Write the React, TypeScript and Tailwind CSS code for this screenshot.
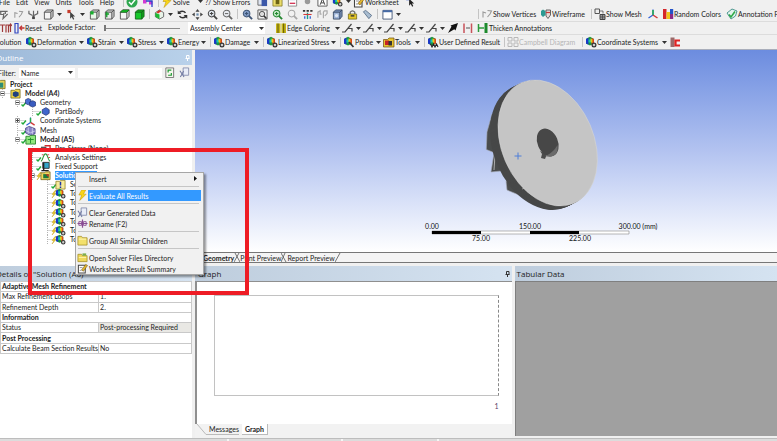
import type { ReactNode } from "react";

/* ---------- icons ---------- */

type IconName =
  | "contour" | "bolt" | "check" | "cube" | "cubeGreen" | "cubeFace" | "cubeTop" | "cubeFull" | "select" | "view3d"
  | "rotate" | "pan" | "zoomIn" | "zoomOut" | "zoomBox" | "zoomFit" | "zoomGreen" | "zoomGray" | "axes" | "flag"
  | "eye" | "camera" | "tag" | "window" | "wire" | "mesh" | "colors" | "note" | "edge" | "slash"
  | "arrowFat" | "thick" | "thicken" | "grid" | "red" | "probe" | "tools" | "user" | "folder" | "folderOpen" | "project"
  | "model" | "parts" | "part" | "meshTree" | "modal" | "prestress" | "settings" | "support" | "info"
  | "clear" | "rename" | "worksheet" | "page" | "letter" | "points" | "vertex" | "pick" | "solution" | "explode"
  | "reset" | "chart" | "pages" | "light" | "sheet" | "dot" | "pointer" | "padlock";

function Lens({ c, fill, sign }: { c: string; fill: string; sign?: "+" | "-" }) {
  return (
    <>
      <circle cx="5" cy="5" r="3.600" fill={fill} stroke={c} strokeWidth="1.100" />
      <path d="M7.500 7.500 11 11" stroke={c} strokeWidth="2" />
      {sign && <path d={sign === "+" ? "M3.200 5h3.600M5 3.200v3.600" : "M3.200 5h3.600"} stroke={c} strokeWidth="1.100" />}
    </>
  );
}

function Box({ f, front, s }: { f: string; front: string; s: string }) {
  return (
    <>
      <path d="M1.500 3.500 4 1h7v7l-2.500 3z" fill={f} stroke={s} strokeWidth=".9" />
      <path d="M1.500 3.500h7V11h-7z" fill={front} stroke={s} strokeWidth=".9" />
      <path d="M8.500 3.500 11 1" stroke={s} strokeWidth=".9" />
    </>
  );
}

function Rainbow() {
  return (
    <>
      <path d="M1 3 5 .8 9 3v4.500L5 9.600 1 7.500z" fill="#1c9a3a" />
      <path d="M1 3 3.500 1.600V8.800L1 7.500z" fill="#1b37c8" />
      <path d="M3.500 3.500h2.400v3H3.500z" fill="#18c4b8" />
      <path d="M6.500 2 9 3v4.500L6.500 8.600z" fill="#d8451c" />
      <path d="M5.500 2.600 7.400 3.400V7L5.500 6z" fill="#e8d21c" />
    </>
  );
}

const drawings: Record<IconName, ReactNode> = {
  contour: (<><Rainbow /><circle cx="9" cy="9" r="1.900" fill="#ccc" stroke="#333" strokeWidth="1.200" /></>),
  solution: (<><path d="M1 3h4l1-1h5v8.500H1z" fill="#f1d860" stroke="#6b5a10" strokeWidth=".8" /><path d="M3.500 4.500h6V9h-6z" fill="#1b7a3a" /><path d="M6 4.500h3.500V8z" fill="#d03020" /></>),
  bolt: <path d="M5 0 2 5.500h3L3 11.500 10 4.500H7L9.500 0z" fill="#f8d61a" stroke="#b98d00" strokeWidth=".5" />,
  check: (<><circle cx="6" cy="6" r="5.500" fill="#2fa84f" /><path d="M3 6l2.300 2.400L9.200 3.600" stroke="#fff" strokeWidth="1.500" fill="none" /></>),
  cube: <Box f="#c8c8c8" front="#f4f4f4" s="#444" />,
  cubeGreen: (<><Box f="#c8c8c8" front="#e9f6e9" s="#444" /><path d="M1.500 2.500h3.500V6H1.500z" fill="#15b22c" /></>),
  cubeFace: (<><Box f="#c8c8c8" front="#e9e9e9" s="#444" /><path d="M3 3v6M1.500 5.500h4" stroke="#15a22c" strokeWidth="1.500" /></>),
  cubeTop: (<><Box f="#d8d8d8" front="#f4f4f4" s="#444" /><path d="M1.500 3.500 4 1h7L8.500 3.500z" fill="#14c425" stroke="#125a18" strokeWidth=".7" /></>),
  cubeFull: <Box f="#14a71e" front="#16c82a" s="#125a18" />,
  select: (<><path d="M1.500 1h3.500v3.500H1.500z" fill="#c53a2a" /><path d="M4.500 3v7.500l1.800-1.700 1.500 2.800 1.200-.6-1.400-2.800h2.400z" fill="#444" /></>),
  pointer: (<><path d="M2 1v3h3" stroke="#2f50c8" strokeWidth="1.500" fill="none" /><path d="M4.500 3v7.500l1.800-1.700 1.500 2.800 1.200-.6-1.400-2.800h2.400z" fill="#222" /></>),
  points: (<path d="M.5 2.500h10M3 2.500v3.500h3M6.500 4.500l-1 6 5-5M8 2.500v3" stroke="#666" strokeWidth="1.300" fill="none" />),
  vertex: (<><path d="M1 2v3l4 2M10.500 2v3l-4 2M6 2v9" stroke="#666" strokeWidth="1.300" fill="none" /><path d="M4.500 8h3v3h-3z" fill="#444" /></>),
  pick: <path d="M2 9.500V4L5 5M6.500 2.500l4 .5-1.500 3-2.500 3" stroke="#999" strokeWidth="1.100" fill="none" />,
  view3d: (<><path d="M1.500 4 6 1l4.500 3v4.500L6 11 1.500 8.500z" fill="#e8f3e8" stroke="#555" strokeWidth=".9" /><path d="M1.500 4 6 6v5L1.500 8.500z" fill="#1dbb34" /><path d="M2.500 3.500 6 1l2 1.500L4.500 5z" fill="#d4342a" /></>),
  rotate: (<><path d="M2 4.500C3.500 1.800 7.500 1.800 9.300 4.200M10 7.500C8.500 10.200 4.500 10.200 2.700 7.800" stroke="#333" strokeWidth="1.600" fill="none" /><path d="M.8 1.500v4h4zM11.200 10.500v-4h-4z" fill="#333" /></>),
  pan: (<><path d="M6 0 8.200 3H3.800zM6 12 3.800 9h4.400zM0 6l3-2.200v4.400zM12 6 9 8.200V3.800z" fill="#444" /><path d="M4.800 4.800h2.400v2.400H4.800z" fill="#6a8cae" /></>),
  zoomIn: <Lens c="#444" fill="#dfe5ec" sign="+" />,
  zoomOut: <Lens c="#666" fill="#e6e9ee" sign="-" />,
  zoomBox: <Lens c="#3d5475" fill="#7f9ac4" sign="+" />,
  zoomFit: (<><path d="M1 1h10v10H1z" fill="none" stroke="#555" /><g transform="translate(1.500 1.500) scale(.8)"><Lens c="#333" fill="#ddd" /></g></>),
  zoomGreen: <Lens c="#23862f" fill="#bfe8c2" sign="+" />,
  zoomGray: <Lens c="#a8a8a8" fill="#f2f2f2" />,
  axes: (<><path d="M6 1.500V7L1.500 10" stroke="#2f60d8" strokeWidth="1.300" fill="none" /><path d="M6 7l4.500 3" stroke="#d43a3a" strokeWidth="1.500" /><path d="M6 2v5" stroke="#25ad4c" strokeWidth="1.500" /></>),
  flag: (<><path d="M1 1h2.500v2H1zM5 1h2.500v2H5zM9 1h2.500v2H9z" fill="#333" /><path d="M6 4v7" stroke="#19a08a" strokeWidth="1.500" /><path d="M1.500 6h9" stroke="#d43a3a" strokeWidth="1.200" /><path d="M3 8v2.500M9 8v2.500" stroke="#2f60d8" strokeWidth="1.400" /></>),
  eye: <path d="M1 9.500V3.500L3.500 2v3.500H5M7 10V3.500L8 2h3v3L8.500 7.500" stroke="#aaa" strokeWidth="1.300" fill="none" />,
  camera: (<><Box f="#7890b8" front="#9db3d6" s="#33445e" /><circle cx="5" cy="7.200" r="1.800" fill="#dfe8f4" /></>),
  padlock: (<><path d="M3.500 6V3.500Q6 .5 8.500 3.500V6" stroke="#666" strokeWidth="1.300" fill="none" /><path d="M1.500 5.500h9v5.500h-9z" fill="#e6c82a" stroke="#6f6412" strokeWidth=".8" /><path d="M4 7.500h4" stroke="#333" strokeWidth="1.500" /></>),
  tag: <path d="M1.500 3 4 1.500 10.500 7 7.500 10.500z" fill="#a9bdd1" stroke="#556b84" strokeWidth=".9" />,
  window: (<><path d="M1 1.500h10v9.500H1z" fill="#fff" stroke="#47597a" strokeWidth="1" /><path d="M1 1.500h10v2H1z" fill="#456ba8" /></>),
  wire: (<><path d="M1 3 3 1.500 5.500 3v4L3 9 1 7z" fill="#2c9a93" /><path d="M6 2h4.500v5L8 10.500 6 8z" fill="#e8dada" stroke="#555" strokeWidth=".9" /><path d="M6 4.500h4" stroke="#c93a3a" strokeWidth="1.200" /></>),
  mesh: (<><path d="M1 1h4.500v4.500H1z" fill="#eee" stroke="#555" /><path d="M6 6.500h5V11.500H6z" fill="#999" stroke="#444" /><path d="M8.500 6.500v5M6 9h5M6 3h3v2.500" stroke="#444" strokeWidth=".7" fill="none" /></>),
  colors: (<><path d="M1 1h3.500v10H1z" fill="#d4262a" /><path d="M4.500 4H8v7H4.500z" fill="#efc61c" /><path d="M8 1h3.200v5H8z" fill="#2453c8" /><path d="M8 6h3.200v5H8z" fill="#8b2b88" /></>),
  note: (<><path d="M1 5 6 1l5 2-1.500 5L5 11z" fill="#e3f2ee" stroke="#3d8e86" strokeWidth=".9" /><path d="M3 6.500l2 2.500L9 3.500" stroke="#2faa48" strokeWidth="1.600" fill="none" /></>),
  edge: (<><path d="M1 1.500h4.500v9.500H1zM6.500 1.500H11v9.500H6.500z" fill="#c5b414" /><path d="M3 1.500v9.500M8.700 1.500v9.500" stroke="#5e5608" strokeWidth="1" /></>),
  slash: <path d="M0 10h3L9.500 2M6 6.500h4v3" stroke="#444" strokeWidth="1.200" fill="none" />,
  arrowFat: <path d="M1 11 4.500 4.500 3.500 3.500 11 1 8.500 8.500 7.300 7.300z" fill="#111" />,
  thick: (<><path d="M2 1.500v9.500M9.500 1.500v9.500" stroke="#c8525a" strokeWidth="1.500" /><path d="M4 6h4" stroke="#555" /></>),
  thicken: (<><path d="M1.500 2v8M1.500 6H7" stroke="#2a9a3a" strokeWidth="1.500" /><path d="M9 1v10" stroke="#1c8a2c" strokeWidth="3" /></>),
  grid: <path d="M1 1.500h4v3.500H1zM1 7h4v3.500H1zM7 1.500h4v3.500H7zM7 7h4v3.500H7z" stroke="#b8b8b8" strokeWidth="1" fill="none" />,
  red: (<><path d="M1.500 1.500h4V11h-4z" fill="#9a6a6a" /><path d="M11 4.500H6.500v5H11" stroke="#e02222" strokeWidth="2.200" fill="none" /></>),
  probe: (<><Rainbow /><path d="M6 6 10.500 11" stroke="#333" strokeWidth="1.800" /></>),
  tools: (<><path d="M.5 3.500h4L6 2h5v9H.5z" fill="#e7c52f" stroke="#6b4a10" strokeWidth=".7" /><path d="M2 4.500h4V9H2z" fill="#c82222" /><path d="M5.500 5H9v4.500H5.500z" fill="#333" /></>),
  user: (<><Rainbow /><path d="M3.500 8l1.500 3 1.500-3 1.500 3 1.500-3 1.500 3" stroke="#222" strokeWidth="1.100" fill="none" /></>),
  folder: (<><path d="M1 1.500h4L6 3h5v8H1z" fill="#f3e06c" stroke="#a28a1e" strokeWidth=".8" /><path d="M2 4.500h8" stroke="#fff6b8" strokeWidth="1" /></>),
  folderOpen: (<><path d="M1 2.500h4L6 4h5v6.500H1z" fill="#eed75a" stroke="#a28a1e" strokeWidth=".8" /><path d="M6 1.500h4V4H6z" fill="#7fae4a" /><path d="M2 6h8" stroke="#fff2a8" strokeWidth="1" /></>),
  project: (<><path d="M1 2.500h4L6 1.500h5v9H1z" fill="#e6d355" stroke="#6f6412" strokeWidth=".8" /><path d="M3 4h6v5.500H3z" fill="#2c8d76" /></>),
  model: (<><path d="M1 2.500h4L6 1.500h5v9.500H1z" fill="#f0d64a" stroke="#6f6412" strokeWidth=".8" /><path d="M3 5 6 3.500 9.500 5v3.500L6 10 3 8.500z" fill="#20407e" /></>),
  parts: (<><path d="M.5 3 3.500 1.500l3 1.500v4L3.500 8.500.5 7z" fill="#4a6fd2" stroke="#1d2f6e" strokeWidth=".7" /><path d="M5 5.500 8.500 4 11.500 5.500V9.500L8.500 11 5 9.500z" fill="#3a5cc0" stroke="#1d2f6e" strokeWidth=".7" /></>),
  part: <path d="M2.500 4 6.500 1.800 10 4v4L6.500 10.200 2.500 8z" fill="#3f66cc" stroke="#1d2f6e" strokeWidth=".8" />,
  meshTree: (<><path d="M.5 3.500 4.500 1.500l6.500 2.500v5.500L6 11.500.5 8.500z" fill="#8a86c8" stroke="#3c3878" strokeWidth=".8" /><path d="M.5 6 6 8.500 11 6.500M3.500 2.500v7M8 3v7.500" stroke="#e6e4fa" strokeWidth=".7" fill="none" /></>),
  modal: (<><path d="M1 2.500h4L6 1.500h5.500v9.500H1z" fill="#8ee67c" stroke="#1e7c24" strokeWidth=".9" /><path d="M6 4v6M3 6h6.500" stroke="#1f8c2a" strokeWidth="1" /></>),
  prestress: (<><path d="M1 4h6v5H1z" fill="#555" /><path d="M5 3h6v4" stroke="#cc2c2c" strokeWidth="1.500" fill="none" /></>),
  settings: (<><path d="M1 10C3 10 3.500 2 6 2s3 8 5 8" stroke="#2c9a3c" strokeWidth="1.200" fill="none" /><path d="M2 3h2M8 3h2M9 6h2" stroke="#cc4242" strokeWidth="1" /></>),
  support: (<><path d="M3 1.500h7V8H3z" fill="#34a6c8" stroke="#333" strokeWidth="1" /><path d="M1.500 10.500h8M4 2v8" stroke="#222" strokeWidth="1.500" /></>),
  info: (<><path d="M1 2.500h4L6 1.500h5v9.500H1z" fill="#f8ec9a" stroke="#8a7a20" strokeWidth=".8" /><path d="M6 3v4M6 8.300v1.500" stroke="#1d35a8" strokeWidth="1.600" /></>),
  clear: (<><path d="M4.500 1h6v8h-6z" fill="#e9edf8" stroke="#7d86a8" strokeWidth=".9" /><path d="M1 4l4.500 7M5 4.500 1.500 11" stroke="#6d76a0" strokeWidth="1.100" /></>),
  rename: (<><path d="M.5 6h11M6 1.500v9" stroke="#8b4e94" strokeWidth="1.300" /><path d="M2 4h3v4H2zM7 4h3v4H7z" fill="none" stroke="#8b4e94" strokeWidth="1" /></>),
  worksheet: (<><path d="M1.500 2.500h7.500V11H1.500z" fill="#fff" stroke="#444" strokeWidth="1.100" /><path d="M5 7.500 9.500 1.500l2 1.200L7 9z" fill="#e2b62c" stroke="#6b4e10" strokeWidth=".6" /><path d="M3 5h3M3 8h2" stroke="#777" strokeWidth=".8" /></>),
  page: (<><path d="M2 1h8.500v10.500H2z" fill="#f6f6ee" stroke="#666" strokeWidth=".9" /><path d="M8 3.500H4.500V6M4.500 9H8V6.500" stroke="#1e9a32" strokeWidth="1.300" fill="none" /></>),
  pages: (<><path d="M1 1h7v9H1z" fill="#dfe6f2" stroke="#666" /><path d="M5 3h6v8H5z" fill="#3c58a8" /></>),
  light: (<><path d="M1 1h10v10H1z" fill="#e9dc6a" stroke="#7d7420" strokeWidth=".8" /><path d="M4 3h4v6H4z" fill="#6b6214" /></>),
  sheet: (<><path d="M1.500 1h9v10h-9z" fill="#fff" stroke="#888" /><path d="M3 8h6" stroke="#d43a5a" strokeWidth="1.500" /><path d="M3 4h6" stroke="#8aa0c8" /></>),
  dot: <circle cx="6" cy="6" r="3" fill="#999" />,
  letter: (<><path d="M1 1h10v10H1z" fill="#fff" stroke="#555" strokeWidth="1" /><path d="M3.500 9.500 6 3l2.500 6.500M4.500 7.500h3" stroke="#333" strokeWidth="1" fill="none" /></>),
  explode: <path d="M0 3h5M2.500 3v7M6 10.500V3h2.500v7.500M10.500 10V2M9 4l1.500-2L12 4" stroke="#a03a3a" strokeWidth="1.200" fill="none" />,
  reset: (<><path d="M2 1.500h3v9.500H2z" fill="none" stroke="#3246c0" strokeWidth="1.200" /><path d="M11.500 6H7M9 3.800 6.800 6 9 8.200" stroke="#c03232" strokeWidth="1.300" fill="none" /></>),
  chart: (<><path d="M1 4h3.500v3.500H1zM7 5h3.500v3.500H7z" fill="#d23ad2" /><path d="M4 5h6v6" stroke="#2843c8" strokeWidth="1.300" fill="none" /></>),
};

function Icon({ name, className = "size-[11px]" }: { name: IconName; className?: string }) {
  return (
    <svg viewBox="0 0 12 12" aria-hidden="true" className={`${className} shrink-0`}>
      {drawings[name]}
    </svg>
  );
}

function Caret() {
  return (
    <svg viewBox="0 0 5 3" aria-hidden="true" className="h-[3px] w-[5px] shrink-0">
      <path d="M0 0h5L2.500 3z" fill="#333" />
    </svg>
  );
}

/* ---------- toolbars ---------- */

function Tool({ icon, label, menu, width = "w-[15px]", muted }: {
  icon?: IconName; label?: string; menu?: boolean; width?: string; muted?: boolean;
}) {
  return (
    <button
      type="button"
      aria-label={label ?? icon}
      className={`flex h-full shrink-0 items-center whitespace-nowrap ${width} ${muted ? "text-[#b5b5b5]" : ""}`}
    >
      {icon && <Icon name={icon} className="size-[12px]" />}
      {label}
      {menu && <span className="ml-auto pr-[2px]"><Caret /></span>}
    </button>
  );
}

function IconTool({ name, menu }: { name: IconName; menu?: boolean }) {
  return (
    <button type="button" aria-label={name} className="flex h-full shrink-0 items-center px-[2px]">
      <Icon name={name} />
      {menu && <span className="ml-[3px]"><Caret /></span>}
    </button>
  );
}

function Sep() {
  return <span className="mx-[2px] h-[10px] w-px shrink-0 bg-[#c4c4c4]" />;
}

function Toolbars() {
  return (
    <header className="-mt-1 shrink-0 border-b border-[#a9aebb] bg-[#f0f0f0]">
      <div className="flex h-[11px] items-center">
        <nav className="-ml-px flex w-[122px] shrink-0 gap-[6px]">
          {["File", "Edit", "View", "Units", "Tools", "Help"].map((m) => (
            <button key={m} type="button">{m}</button>
          ))}
        </nav>
        <Sep />
        <Tool icon="check" width="w-[16px]" />
        <Tool icon="chart" width="w-[14px]" />
        <Sep />
        <Tool icon="bolt" label="Solve" menu width="w-[44px]" />
        <Tool label="?/ Show Errors" width="w-[50px]" />
        <IconTool name="pages" />
        <IconTool name="light" />
        <IconTool name="sheet" />
        <IconTool name="dot" />
        <IconTool name="letter" />
        <IconTool name="contour" menu />
        <Tool icon="worksheet" label="Worksheet" width="w-[50px]" />
        <IconTool name="pointer" />
      </div>

      <div className="flex h-[14px] items-center">
        <div className="-ml-1 flex h-full items-center">
          <IconTool name="points" />
          <IconTool name="pick" />
          <IconTool name="vertex" />
          <IconTool name="cube" menu />
          <IconTool name="select" menu />
          <IconTool name="cubeGreen" />
          <IconTool name="cubeFace" />
          <IconTool name="cubeTop" />
          <IconTool name="cubeFull" />
          <Sep />
          <IconTool name="view3d" menu />
          <IconTool name="rotate" />
          <IconTool name="pan" />
          <IconTool name="zoomIn" />
          <IconTool name="zoomOut" />
          <Sep />
          <IconTool name="zoomBox" />
          <IconTool name="zoomFit" />
          <IconTool name="zoomGreen" />
          <IconTool name="zoomGray" />
          <IconTool name="flag" />
          <IconTool name="eye" />
          <IconTool name="camera" />
          <IconTool name="padlock" />
          <IconTool name="tag" />
          <Sep />
          <IconTool name="window" menu />
        </div>
        <div className="ml-auto flex h-full items-center">
          <Sep />
          <Tool icon="pick" label="Show Vertices" width="w-[59px]" />
          <Tool icon="wire" label="Wireframe" width="w-[49px]" />
          <Sep />
          <Tool icon="mesh" label="Show Mesh" width="w-[53px]" />
          <Tool icon="axes" />
          <Tool icon="colors" label="Random Colors" width="w-[64px]" />
          <Tool icon="note" label="Annotation P" width="w-[51px]" />
        </div>
      </div>

      <div className="flex h-[13px] items-center border-t border-[#dcdcdc]">
        <Tool icon="explode" width="w-[13px]" />
        <Tool icon="reset" label="Reset" width="w-[35px]" />
        <label htmlFor="explode" className="w-[56px] shrink-0 self-start">Explode Factor:</label>
        <input
          id="explode"
          type="range"
          min={0}
          max={10}
          defaultValue={0}
          className="h-px w-[76px] shrink-0 appearance-none bg-[#8b8b8b] [&::-webkit-slider-thumb]:h-[6px] [&::-webkit-slider-thumb]:w-[2px] [&::-webkit-slider-thumb]:appearance-none [&::-webkit-slider-thumb]:bg-[#777]"
        />
        <span className="ml-2 flex h-full w-[77px] shrink-0 items-center bg-white pr-px">
          <select aria-label="Explode origin" className="min-w-0 flex-1 appearance-none bg-transparent pl-[2px]">
            <option>Assembly Center</option>
          </select>
          <Caret />
        </span>
        <span className="ml-[6px]"><Sep /></span>
        <Tool icon="edge" label="Edge Coloring" menu width="w-[67px]" />
        {["a", "b", "c", "d", "e"].map((k) => (
          <Tool key={k} icon="slash" menu width="w-[21px]" />
        ))}
        <Tool icon="arrowFat" />
        <Tool icon="thick" width="w-[15px]" />
        <Tool icon="thicken" label="Thicken Annotations" width="w-[80px]" />
      </div>

      <div className="flex h-[15px] items-center border-t border-[#dcdcdc]">
        <div className="-ml-1 flex h-full items-center">
          <Tool label="Solution" width="w-[29px]" />
          <Tool icon="contour" label="Deformation" menu width="w-[61px]" />
          <Tool icon="contour" label="Strain" menu width="w-[40px]" />
          <Tool icon="contour" label="Stress" menu width="w-[40px]" />
          <Tool icon="contour" label="Energy" menu width="w-[42px]" />
          <Sep />
          <Tool icon="contour" label="Damage" menu width="w-[48px]" />
          <Sep />
          <Tool icon="contour" label="Linearized Stress" menu width="w-[72px]" />
          <Sep />
          <Tool icon="probe" label="Probe" menu width="w-[40px]" />
          <Tool icon="tools" label="Tools" menu width="w-[39px]" />
          <Sep />
          <Tool icon="user" label="User Defined Result" width="w-[75px]" />
          <Sep />
          <Tool icon="grid" label="Campbell Diagram" width="w-[73px]" muted />
          <Sep />
          <Tool icon="contour" label="Coordinate Systems" menu width="w-[84px]" />
          <Tool icon="red" />
        </div>
      </div>
    </header>
  );
}

/* ---------- outline ---------- */

type Node = { level: 0 | 1 | 2 | 3 | 4; icon: IconName; text: string; bold?: boolean; box?: "+" | "-"; mark?: "ok" | "bolt"; selected?: boolean };

const tree: Node[] = [
  { level: 0, icon: "project", text: "Project", bold: true },
  { level: 1, icon: "model", text: "Model (A4)", bold: true, box: "-" },
  { level: 2, icon: "parts", text: "Geometry", box: "-", mark: "ok" },
  { level: 3, icon: "part", text: "PartBody", mark: "ok" },
  { level: 2, icon: "axes", text: "Coordinate Systems", box: "+", mark: "ok" },
  { level: 2, icon: "meshTree", text: "Mesh", mark: "ok" },
  { level: 2, icon: "modal", text: "Modal (A5)", bold: true, box: "-", mark: "ok" },
  { level: 3, icon: "prestress", text: "Pre-Stress (None)" },
  { level: 3, icon: "settings", text: "Analysis Settings", mark: "ok" },
  { level: 3, icon: "support", text: "Fixed Support", mark: "ok" },
  { level: 3, icon: "solution", text: "Solution (A6)", bold: true, box: "-", mark: "bolt", selected: true },
  { level: 4, icon: "info", text: "Solution Information", mark: "ok" },
  { level: 4, icon: "contour", text: "Total Deformation", mark: "bolt" },
  { level: 4, icon: "contour", text: "Total Deformation 2", mark: "bolt" },
  { level: 4, icon: "contour", text: "Total Deformation 3", mark: "bolt" },
  { level: 4, icon: "contour", text: "Total Deformation 4", mark: "bolt" },
  { level: 4, icon: "contour", text: "Total Deformation 5", mark: "bolt" },
  { level: 4, icon: "contour", text: "Total Deformation 6", mark: "bolt" },
];

const indent = ["pl-0", "pl-[15px]", "pl-[30px]", "pl-[45px]", "pl-[60px]"];

function Branch({ node }: { node: Node }) {
  return (
    <svg viewBox="0 0 22 9" aria-hidden="true" className="-mr-2 h-[9px] w-[22px] shrink-0">
      {node.level > 0 && <path d="M6.500 0V9M6.500 4.500H14" stroke="#b4b4b4" strokeDasharray="1 1" fill="none" />}
      {node.box && <path d="M4.500 2.500h4v4h-4z" fill="#fff" stroke="#a0a0a0" />}
      {node.box && <path d={node.box === "+" ? "M5 4.500h3M6.500 3v3" : "M5 4.500h3"} stroke="#444" />}
      {node.mark === "ok" && <path d="M10.500 6.500 12 8 15 4.500" stroke="#22a83a" strokeWidth="1.400" fill="none" />}
      {node.mark === "bolt" && <path d="M14 1.500 11 5.500h2L11 9l4-4.500h-2l2-3z" fill="#f2cf1c" stroke="#b8960c" strokeWidth=".4" />}
    </svg>
  );
}

function Pin({ color }: { color: string }) {
  return (
    <svg viewBox="0 0 5 6" aria-hidden="true" className="h-[6px] w-[5px]">
      <path d="M1.500 .5h2.500v3H1.500zM.5 3.500h4M2.500 3.500V6" stroke={color} fill="none" />
    </svg>
  );
}

function Outline() {
  return (
    <section className="flex w-[192px] shrink-0 flex-col bg-white">
      <h2 className="flex h-[15px] shrink-0 items-center justify-between bg-linear-to-r from-[#9fbbda] to-[#b9d1ea] pr-[2px] text-[8px] text-white">
        <span className="-ml-1 font-['Open_Sans',sans-serif]">Outline</span>
        <Pin color="#ffffff" />
      </h2>
      <div className="flex h-[15px] shrink-0 items-center bg-[#f0f0f0]">
        <label htmlFor="filter" className="-ml-[2px] w-[21px] shrink-0">Filter:</label>
        <span className="flex h-[10px] w-[56px] shrink-0 items-center bg-white pr-[2px]">
          <select id="filter" className="min-w-0 flex-1 appearance-none bg-transparent pl-[2px]">
            <option>Name</option>
          </select>
          <Caret />
        </span>
        <input aria-label="Filter text" className="ml-[3px] h-[10px] min-w-0 flex-1 bg-white" />
        <IconTool name="page" />
        <IconTool name="clear" />
      </div>
      <ul className="-ml-[19px] grid h-[164px] auto-rows-fr">
        {tree.map((n) => (
          <li key={n.text} className={`flex items-center whitespace-nowrap ${indent[n.level]}`}>
            <Branch node={n} />
            <Icon name={n.icon} className="mr-1 size-[11px]" />
            <span className={`h-[9px] leading-[9px] ${n.bold ? "font-bold" : ""} ${n.selected ? "bg-[#3399ff] pr-[2px] text-white" : ""}`}>
              {n.text}
            </span>
          </li>
        ))}
      </ul>
    </section>
  );
}

/* ---------- geometry view ---------- */

const sweep = [8, 7, 6, 5, 4, 3, 2, 1];

function Viewport() {
  return (
    <section className="flex min-w-0 flex-1 flex-col">
      <div className="min-h-0 flex-1 bg-linear-to-b from-[#6c8cdf] via-[#b3c3f0] to-white">
        <svg viewBox="0 0 582 202" role="img" aria-label="Model geometry" className="size-full" fontSize="7">
          <g fill="#4a4c4c" stroke="#a5a9b5" strokeWidth=".6">
            <path d="M297 64 292 82 291.300 99.500 300 103 303 80z" />
            <path d="M299 103 296 122 306 121 305 108z" />
            <path d="M311 131 312 140 324 145 328 138z" />
          </g>
          <path d="M300 105 299 120" stroke="#d5d5d5" strokeWidth=".7" />
          {sweep.map((n) => (
            <ellipse key={n} cx={352.7 - n} cy={93 + n / 2} rx="65.700" ry="46.100" transform={`rotate(66.600 ${352.7 - n} ${93 + n / 2})`} fill="#474848" />
          ))}
          <path d="M327 139 335 136" stroke="#bbb" strokeWidth=".7" />
          <ellipse cx="352.700" cy="93" rx="65.700" ry="46.100" transform="rotate(66.600 352.700 93)" fill="#c5c5c5" stroke="#d8d8d8" strokeWidth=".5" />
          <path d="M345 101 347 104 346 108 350 109 352 104z" fill="#4c4c4c" />
          <ellipse cx="352.700" cy="92.500" rx="14.500" ry="10.200" transform="rotate(66.600 352.700 92.500)" fill="#474747" />
          <path d="M350 106C354 105 360 100 362.500 95 363.500 103 360 107.500 352 106.500z" fill="#6b6b6b" />
          <path d="M319.500 106h7M323 102.500v7" stroke="#4f7fd8" strokeWidth="1" />
          <g transform="translate(237 181)">
            <path d="M0 0h197v3H0z" fill="#fff" stroke="#888" strokeWidth=".6" />
            <path d="M0 0h49v3H0zM98 0h49v3H98z" fill="#000" />
          </g>
          <g fill="#111" textAnchor="middle">
            <text x="237" y="179">0.00</text>
            <text x="335" y="179">150.00</text>
            <text x="443" y="179">300.00 (mm)</text>
            <text x="286" y="191">75.00</text>
            <text x="385" y="191">225.00</text>
          </g>
        </svg>
      </div>
      <div className="flex h-[11px] shrink-0 items-center border-y border-[#777] bg-[#f4f4f4] pl-2">
        <button type="button" className="font-bold">Geometry</button>
        <Slash d="M0 9 5 0M1 0 6 9" />
        <button type="button">Print Preview</button>
        <Slash d="M0 9 4 0M0 0 5 9" />
        <button type="button">Report Preview</button>
        <Slash d="M0 9 5 0" />
      </div>
      <div className="h-[3px] shrink-0 bg-[#f0f0f0]" />
    </section>
  );
}

function Slash({ d }: { d: string }) {
  return (
    <svg viewBox="0 0 6 9" aria-hidden="true" className="h-[9px] w-[6px] shrink-0">
      <path d={d} stroke="#555" strokeWidth=".8" fill="none" />
    </svg>
  );
}

/* ---------- lower panels ---------- */

const details: { name: string; value?: string; locked?: boolean }[] = [
  { name: "Adaptive Mesh Refinement" },
  { name: "Max Refinement Loops", value: "1." },
  { name: "Refinement Depth", value: "2." },
  { name: "Information" },
  { name: "Status", value: "Post-processing Required", locked: true },
  { name: "Post Processing" },
  { name: "Calculate Beam Section Results", value: "No" },
];

const panelTitle =
  "flex h-[15px] shrink-0 items-center justify-between bg-linear-to-r from-[#becddd] to-[#d5e3f1] font-['Open_Sans',sans-serif] text-[8px] text-[#222]";

function Details() {
  return (
    <section className="flex w-[192px] shrink-0 flex-col bg-white">
      <h2 className={panelTitle}><span className="-ml-1">Details of "Solution (A6)"</span></h2>
      <table className="h-[73px] w-full border-collapse border border-[#c9c9c9]">
        <tbody>
          {details.map((d) => (
            <tr key={d.name} className="border-b border-[#c9c9c9] leading-[9px] whitespace-nowrap">
              <th scope="row" colSpan={d.value ? 1 : 2} className={`py-0 pr-0 pl-px text-left ${d.value ? "w-[95px] font-normal" : "font-bold"}`}>
                {d.name}
              </th>
              {d.value && (
                <td className={`border-l border-[#c9c9c9] py-0 pl-px ${d.locked ? "bg-[#e9e8e4]" : ""}`}>{d.value}</td>
              )}
            </tr>
          ))}
        </tbody>
      </table>
    </section>
  );
}

function Graph() {
  return (
    <section className="flex min-w-0 flex-[316] flex-col">
      <h2 className={`${panelTitle} pr-[2px] pl-[3px]`}>Graph<Pin color="#333" /></h2>
      <div className="flex min-h-0 flex-1 flex-col border-t border-l-2 border-[#8f8f8f] bg-white pt-[13px] pr-[13px] pb-[14px] pl-[17px]">
        <div className="flex-1 border border-[#c2c2c2] border-r-[#888] [border-right-style:dashed]" />
        <span className="h-[14px] text-right leading-[20px] text-[#5a3c6c]">1</span>
      </div>
      <div className="flex h-[14px] shrink-0 items-start bg-[#f2f2f2]">
        <svg viewBox="0 0 14 11" aria-hidden="true" className="h-[11px] w-[14px] shrink-0">
          <path d="M2 0 11 10.500H14" stroke="#bbb" fill="none" />
        </svg>
        <button type="button" className="h-[11px] border-b border-[#bbb]">Messages</button>
        <button type="button" className="ml-[3px] h-[11px] border-r border-b border-[#bbb] bg-white px-[3px] font-bold">Graph</button>
      </div>
    </section>
  );
}

function TabularData() {
  return (
    <section className="flex min-w-0 flex-[262] flex-col">
      <h2 className={`${panelTitle} pl-[2px]`}>Tabular Data</h2>
      <div className="mb-[2px] flex-1 border-t border-l border-[#7f7f7f] bg-[#a0a0a0]" />
    </section>
  );
}

/* ---------- context menu ---------- */

function Item({ icon, label, active, sub }: { icon?: IconName; label: string; active?: boolean; sub?: boolean }) {
  return (
    <button type="button" role="menuitem" className="flex h-[11px] w-full items-center">
      <span className="flex w-3 shrink-0 justify-center">{icon && <Icon name={icon} />}</span>
      <span className={`flex h-full flex-1 items-center justify-between pr-1 pl-px ${active ? "bg-[#3399ff] text-white" : ""}`}>
        {label}
        {sub && (
          <svg viewBox="0 0 3 5" aria-hidden="true" className="h-[5px] w-[3px]"><path d="M0 0v5l3-2.500z" fill="#111" /></svg>
        )}
      </span>
    </button>
  );
}

function Rule() {
  return <hr className="mx-[2px] mt-[2px] mb-[3px] border-[#c6c6c6]" />;
}

function ContextMenu() {
  return (
    <div role="menu" className="absolute top-[172px] left-[75px] w-[129px] border border-[#a6a6a6] bg-[#f1f1f1] pr-[2px] shadow-[2px_2px_2px_rgba(0,0,0,0.4)]">
      <Item label="Insert" sub />
      <Rule />
      <Item icon="bolt" label="Evaluate All Results" active />
      <Rule />
      <Item icon="clear" label="Clear Generated Data" />
      <Item icon="rename" label="Rename (F2)" />
      <Rule />
      <Item icon="folder" label="Group All Similar Children" />
      <Rule />
      <Item icon="folderOpen" label="Open Solver Files Directory" />
      <Item icon="worksheet" label="Worksheet: Result Summary" />
    </div>
  );
}

export default function App() {
  return (
    <main className="relative flex h-screen flex-col overflow-hidden bg-[#f0f0f0] font-[Lato,'Open_Sans',sans-serif] text-[7px] leading-[10px] text-[#222]">
      <Toolbars />
      <div className="flex flex-[215] gap-[3px]">
        <Outline />
        <Viewport />
      </div>
      <div className="flex flex-[173] gap-[3px]">
        <Details />
        <Graph />
        <TabularData />
      </div>
      <footer className="flex h-[3px] shrink-0 gap-[2px] border-t border-[#bdbdbd] bg-[#f6f6f6]">
        <span className="w-[227px] bg-[#dcdcdc]" />
        <span className="w-[112px] bg-[#dcdcdc]" />
        <span className="w-[94px] bg-[#dcdcdc]" />
        <span className="flex-1 bg-[#dcdcdc]" />
      </footer>
      <ContextMenu />
      <div className="pointer-events-none absolute top-[148px] left-[28px] h-[147px] w-[221px] border-4 border-[#ee1c25]" />
    </main>
  );
}
